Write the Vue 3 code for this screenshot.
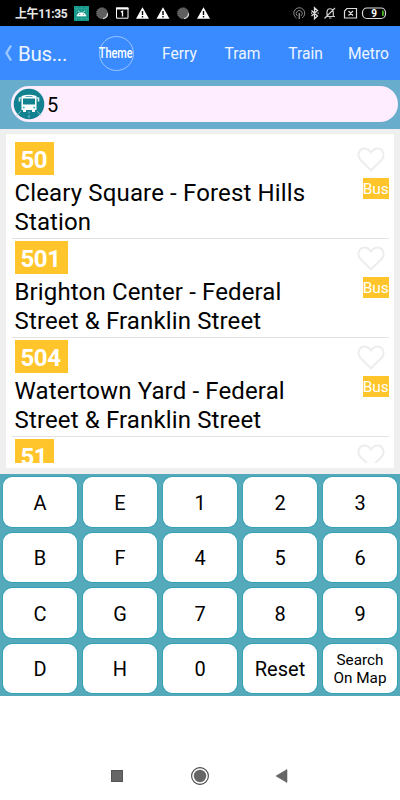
<template>
    <div class="screen">
        <div class="status-bar">
            <span class="clock">上午11:35</span>
            <svg class="status-icons" width="330" height="26" viewBox="70 0 330 26">
                <rect x="74" y="6" width="15" height="15" fill="#129687" />
                <path d="M76.5 6v15M81.5 6v15M86.500 6v15M74 8.500h15M74 18.500h15" stroke="#3dac9f" stroke-width=".5" />
                <path d="M77 16a4.600 4.200 0 0 1 9 0zM78.300 10.500l1.200 2M84.700 10.500l-1.200 2" fill="#fff" stroke="#fff" stroke-width=".7" />
                <circle cx="79.700" cy="14.300" r=".6" fill="#129687" />
                <circle cx="83.300" cy="14.300" r=".6" fill="#129687" />
                <g v-for="x in [102, 183]" :key="x">
                    <circle :cx="x" cy="13.200" r="5.500" fill="#5e5e5e" stroke="#777" stroke-dasharray="1 1" />
                    <path :d="`M${x + 1} 18.700a5.500 5.500 0 0 0 4.500-5.500`" fill="none" stroke="#ddd" stroke-width="1.200" />
                </g>
                <path d="M116.500 8h11.500v10.200h-11.500z" fill="none" stroke="#fff" />
                <path d="M116 7.500h12.500v2h-12.500z" fill="#fff" />
                <path d="M120.800 12l1.700-.7v5.200" fill="none" stroke="#fff" stroke-width="1.300" />
                <g v-for="x in [142.500, 163, 203.500]" :key="x">
                    <path :d="`M${x} 7.300l6.500 11.400h-13z`" fill="#fff" />
                    <path :d="`M${x} 11v4M${x} 16v1.500`" stroke="#000" stroke-width="1.400" />
                </g>
                <g fill="none" stroke="#8a8a8a">
                    <path d="M296.500 18a5.500 5.500 0 1 1 5.500 0M297.300 15.800a3 3 0 1 1 3.900 0" />
                    <path d="M299.300 13v6" stroke-width="1.500" />
                </g>
                <path d="M311.500 10.500l6 5.500-3 2.800v-11l3 2.700-6 5.500M311 13.200h1.200M317.500 13.200h1.200" fill="none" stroke="#ddd" stroke-width="1.300" />
                <path d="M325.500 16.500h9.500M327 16v-3.500c0-5 6-5 6.300 0v4M329 18h2.500M324.500 18.500l10.500-10.500" fill="none" stroke="#ccc" stroke-width="1.200" />
                <path d="M347 8.500h9.500v9.500h-12v-7zM348.500 11l4.500 4.500M353 11l-4.500 4.500" fill="none" stroke="#ddd" stroke-width="1.200" />
                <rect x="362.500" y="8" width="23" height="10.500" rx="4.500" fill="none" stroke="#ddd" stroke-width="1.200" />
                <path d="M382 10.500h1.500q1 3 0 5.500h-1.500z" fill="#49b51c" />
                <text x="371.200" y="17" fill="#fff" font-size="10" font-weight="700">9</text>
            </svg>
        </div>

        <nav class="top-nav">
            <svg class="back" width="9" height="18" viewBox="0 0 9 18">
                <path d="M7 1.500L2.500 9 7 16.500" fill="none" stroke="#9cc7ff" stroke-width="2.400" />
            </svg>
            <span class="nav-title">Bus...</span>
            <button class="theme-btn"><span>Theme</span></button>
            <div class="tabs">
                <a v-for="tab in tabs" :key="tab">{{ tab }}</a>
            </div>
        </nav>

        <div class="search-bar">
            <div class="search-field">
                <svg width="32" height="32" viewBox="0 0 32 32">
                    <circle cx="16" cy="16" r="15.300" fill="#128291" />
                    <path d="M8 23l-4.500 5M24 23l4.500 5M16 23.500v2M16 27v3" stroke="#9ccdd3" stroke-width=".8" />
                    <path d="M8.500 8q7.500-2.500 15 0v14h-15z" fill="#fff" />
                    <path d="M6.500 9.500v4M25.500 9.500v4M8.500 10h-2M23.500 10h2" stroke="#d7eef0" stroke-width="1.600" />
                    <path d="M10 10.500h12v6H10z" fill="#128291" />
                    <path d="M12.500 8.500h7" stroke="#62adb6" />
                    <path d="M10 22h3v2h-3zM19 22h3v2h-3z" fill="#fff" />
                    <circle cx="10.800" cy="19.500" r="1" fill="#2cc3d0" />
                    <circle cx="21.200" cy="19.500" r="1" fill="#2cc3d0" />
                </svg>
                <span class="query">{{ query }}</span>
            </div>
        </div>

        <div class="results">
            <div class="results-list">
                <div v-for="route in routes" :key="route.number" class="route">
                    <div class="route-main">
                        <span class="route-number">{{ route.number }}</span>
                        <div class="route-name">{{ route.name }}</div>
                    </div>
                    <div class="route-side">
                        <svg width="28" height="25" viewBox="0 0 28 25">
                            <path d="M14 23.300L3.500 13C-.8 8 2.500 1.500 7.500 1.500c3 0 4.800 1.500 6.500 4 1.700-2.500 3.500-4 6.500-4 5 0 8.300 6.500 4 11.500z" fill="none" stroke="#ededed" stroke-width="2" />
                        </svg>
                        <span v-if="route.name" class="route-type">Bus</span>
                    </div>
                </div>
            </div>
        </div>

        <div class="keypad">
            <button v-for="key in keys" :key="key" class="key" :class="{ 'key-small': key.length > 5 }">{{ key }}</button>
        </div>

        <div class="system-nav">
            <svg width="200" height="24" viewBox="0 0 200 24">
                <rect x="11.500" y="6.500" width="11" height="11" fill="#666" stroke="#555" />
                <circle cx="100" cy="12" r="8.400" fill="none" stroke="#444" stroke-width="1.100" />
                <circle cx="100" cy="12" r="6.200" fill="#666" />
                <path d="M176 12l11-6.500v13z" fill="#666" stroke="#555" stroke-width=".5" />
            </svg>
        </div>
    </div>
</template>

<script setup>
import { ref } from 'vue'

const query = ref('5')

const tabs = ['Ferry', 'Tram', 'Train', 'Metro']

const routes = [
    { number: '50', name: 'Cleary Square - Forest Hills Station' },
    { number: '501', name: 'Brighton Center - Federal Street & Franklin Street' },
    { number: '504', name: 'Watertown Yard - Federal Street & Franklin Street' },
    { number: '51', name: '' }
]

const keys = [
    'A', 'E', '1', '2', '3',
    'B', 'F', '4', '5', '6',
    'C', 'G', '7', '8', '9',
    'D', 'H', '0', 'Reset', 'Search On Map'
]
</script>

<style>
body {
    background: #fff;
}
</style>

<style scoped>
.screen {
    display: flex;
    flex-direction: column;
    width: 400px;
    height: 800px;
    overflow: hidden;
    font-family: Roboto, "Noto Sans CJK SC", sans-serif;
    color: #000;
}

button {
    font-family: inherit;
    border: none;
    padding: 0;
}

svg {
    display: block;
    flex-shrink: 0;
}

.status-bar {
    display: flex;
    flex-shrink: 0;
    height: 26px;
    background: #000;
}

.clock {
    width: 55px;
    padding-left: 15px;
    line-height: 28px;
    font-size: 12px;
    font-weight: 700;
    letter-spacing: -.4px;
    color: #e6e6e6;
    white-space: nowrap;
}

.top-nav {
    display: flex;
    align-items: center;
    flex-shrink: 0;
    height: 54px;
    padding-left: 4px;
    box-sizing: border-box;
    background: #398bff;
    color: #eef5ff;
}

.nav-title {
    width: 82px;
    padding: 2px 0 0 5px;
    font-size: 20.500px;
    letter-spacing: -.3px;
}

.theme-btn {
    display: flex;
    align-items: center;
    justify-content: center;
    width: 35px;
    height: 35px;
    box-sizing: border-box;
    border: 1px solid #9cc5ff;
    border-radius: 50%;
    background: none;
    color: #fff;
    font-size: 14px;
}

.theme-btn span {
    transform: scale(.78, 1.05);
    font-weight: 500;
}

.tabs {
    display: grid;
    grid-template-columns: repeat(4, 63px);
    padding: 1px 0 0 14.500px;
    font-size: 15.600px;
    text-align: center;
}

.search-bar {
    flex-shrink: 0;
    height: 49px;
    padding: 6px 2px 7px 11px;
    box-sizing: border-box;
    background: #68adcb;
}

.search-field {
    display: flex;
    align-items: center;
    gap: 2px;
    height: 36px;
    padding-left: 2px;
    border-radius: 18px;
    background: #feecff;
    font-size: 20px;
}

.query {
    padding-top: 2px;
}

.results {
    flex-shrink: 0;
    height: 345px;
    padding: 5px 6px 6px;
    box-sizing: border-box;
    background: #efefef;
}

.results-list {
    height: 334px;
    padding: 6px 5px 5px 6px;
    box-sizing: border-box;
    background: #fff;
    overflow: clip;
    overflow-clip-margin: content-box;
}

.route {
    display: flex;
    justify-content: space-between;
    height: 99px;
    padding: 2px 0 0 2.500px;
    box-sizing: border-box;
    border-bottom: 1px solid #e3e3e3;
}

.route-main {
    width: 310px;
}

.route-number {
    display: inline-block;
    height: 33px;
    padding: 0 7px 0 6px;
    line-height: 36px;
    background: #ffc52a;
    color: #fff;
    font-size: 24px;
    font-weight: 700;
    letter-spacing: -.4px;
    vertical-align: top;
}

.route-name {
    padding-top: 4px;
    font-size: 24px;
    letter-spacing: .14px;
    line-height: 28.500px;
}

.route-side {
    display: flex;
    flex-direction: column;
    align-items: flex-end;
    padding-top: 5px;
}

.route-side svg {
    margin-right: 4px;
}

.route-type {
    width: 26.500px;
    height: 21px;
    margin-top: 6px;
    background: #ffc52a;
    color: #fff;
    font-size: 15.500px;
    line-height: 23px;
    text-align: center;
}

.keypad {
    display: grid;
    grid-template-columns: repeat(5, 74px);
    grid-auto-rows: 49.500px;
    gap: 6px;
    flex-shrink: 0;
    height: 222px;
    padding: 3px;
    box-sizing: border-box;
    background: #54a9bb;
}

.key {
    padding-top: 2px;
    border-radius: 9px;
    background: #fff;
    box-shadow: 0 0 0 1px #35a3b5;
    color: #000;
    font-size: 20px;
}

.key-small {
    padding: 2px 9px 0;
    font-size: 15.300px;
    line-height: 18px;
}

.system-nav {
    display: flex;
    flex: 1;
    align-items: flex-end;
    justify-content: center;
    padding-bottom: 12px;
}
</style>
